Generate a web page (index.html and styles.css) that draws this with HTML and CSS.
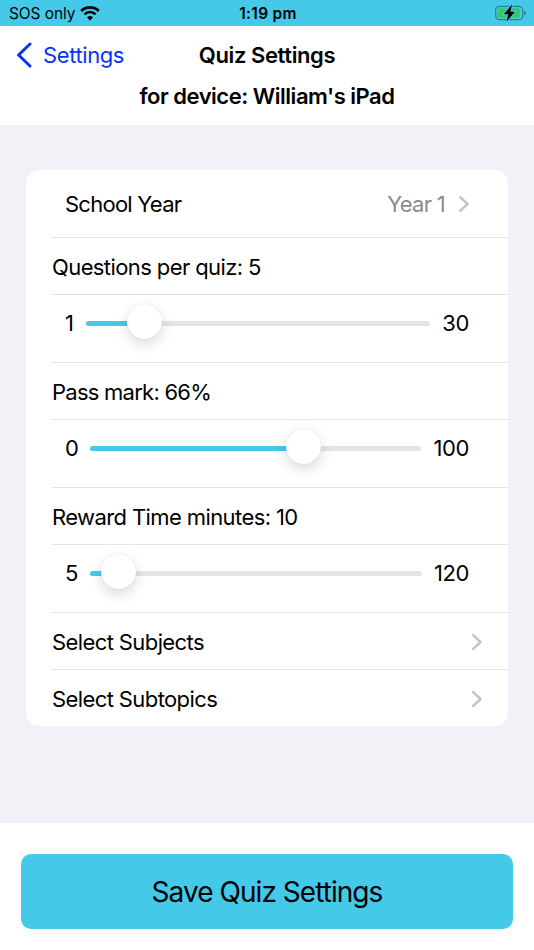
FILE: index.html
```
<!DOCTYPE html>
<html lang="en">
<head>
    <meta charset="UTF-8">
    <meta name="viewport" content="width=device-width, initial-scale=1.0">
    <title>Quiz Settings</title>
    <link rel="stylesheet" href="styles.css">
</head>
<body>
    <div class="status-bar">
        <div class="carrier">
            <span>SOS only</span>
            <svg class="wifi" width="20" height="16" viewBox="0 0 20 16">
                <path d="M1.2 6 A12.3 12.3 0 0 1 18.8 6" fill="none" stroke="#000" stroke-width="2.7"/>
                <path d="M4.5 9.4 A7.7 7.7 0 0 1 15.5 9.4" fill="none" stroke="#000" stroke-width="2.5"/>
                <path d="M10 15.4 L7 12.4 A4.3 4.3 0 0 1 13 12.4 Z"/>
            </svg>
        </div>
        <div class="clock">1:19 pm</div>
        <div class="battery">
            <svg width="32" height="18" viewBox="0 0 32 18">
                <rect x="0.7" y="2.3" width="27" height="13.4" rx="3.8" fill="none" stroke="#2b7f94" stroke-width="1.2"/>
                <path d="M29 6.8 Q31 7.3 31 9 Q31 10.7 29 11.2 Z" fill="#2b7f94"/>
                <rect x="2.7" y="4.3" width="22" height="9.4" rx="2" fill="#34c759"/>
                <path d="M16.6 1.3 L9.2 10 H13.5 L12 16.9 L19.4 8 H15.1 Z" stroke="#45c9e9" stroke-width="2.6"/>
                <path d="M16.6 1.3 L9.2 10 H13.5 L12 16.9 L19.4 8 H15.1 Z" stroke="#000" stroke-width="0.5" stroke-linejoin="round"/>
            </svg>
        </div>
    </div>

    <header class="header">
        <div class="nav">
            <a href="#" class="back">
                <svg width="16" height="26" viewBox="0 0 16 26">
                    <path d="M14 2 L2.6 13 L14 24" fill="none" stroke="#0a32f5" stroke-width="3" stroke-linecap="round" stroke-linejoin="round"/>
                </svg>
                <span>Settings</span>
            </a>
            <h1 class="title">Quiz Settings</h1>
        </div>
        <h2 class="device">for device: William's iPad</h2>
    </header>

    <main class="content">
        <div class="card">
            <div class="row row-tall row-inset">
                <span class="tight">School Year</span>
                <span class="value">Year 1</span>
                <svg class="chevron" width="12" height="18" viewBox="0 0 12 18">
                    <path d="M2.2 2.2 L9.6 9 L2.2 15.8" fill="none" stroke="#c4c4c7" stroke-width="2.5" stroke-linecap="round" stroke-linejoin="round"/>
                </svg>
            </div>
            <div class="row"><span>Questions per quiz: 5</span></div>
            <div class="row row-tall row-slider">
                <span class="min">1</span>
                <div class="slider">
                    <div class="fill" style="width: 17.1%"></div>
                    <div class="thumb" style="left: 17.1%"></div>
                </div>
                <span class="max">30</span>
            </div>
            <div class="row"><span class="tight">Pass mark: 66%</span></div>
            <div class="row row-tall row-slider">
                <span class="min">0</span>
                <div class="slider">
                    <div class="fill" style="width: 64.3%"></div>
                    <div class="thumb" style="left: 64.3%"></div>
                </div>
                <span class="max">100</span>
            </div>
            <div class="row"><span>Reward Time minutes: 10</span></div>
            <div class="row row-tall row-slider">
                <span class="min">5</span>
                <div class="slider">
                    <div class="fill" style="width: 8.6%"></div>
                    <div class="thumb" style="left: 8.6%"></div>
                </div>
                <span class="max">120</span>
            </div>
            <div class="row">
                <span>Select Subjects</span>
                <svg class="chevron" width="12" height="18" viewBox="0 0 12 18">
                    <path d="M2.2 2.2 L9.6 9 L2.2 15.8" fill="none" stroke="#c4c4c7" stroke-width="2.5" stroke-linecap="round" stroke-linejoin="round"/>
                </svg>
            </div>
            <div class="row">
                <span>Select Subtopics</span>
                <svg class="chevron" width="12" height="18" viewBox="0 0 12 18">
                    <path d="M2.2 2.2 L9.6 9 L2.2 15.8" fill="none" stroke="#c4c4c7" stroke-width="2.5" stroke-linecap="round" stroke-linejoin="round"/>
                </svg>
            </div>
        </div>
    </main>

    <footer class="footer">
        <button type="button" class="btn">Save Quiz Settings</button>
    </footer>
</body>
</html>
```
FILE: styles.css
```
* {
    margin: 0;
    padding: 0;
    box-sizing: border-box;
}

body {
    display: flex;
    flex-direction: column;
    height: 950px;
    font-family: Inter, 'Liberation Sans', sans-serif;
    font-size: 22px;
    line-height: 28px;
    letter-spacing: -0.4px;
    color: #000;
    background: #fff;
    overflow: hidden;
}

.status-bar {
    display: grid;
    grid-template-columns: 1fr auto 1fr;
    align-items: center;
    height: 26px;
    padding: 2px 7px 0 9px;
    background: #45c9e9;
    font-size: 15.5px;
    line-height: 20px;
    letter-spacing: -0.1px;
}

.carrier {
    display: flex;
    align-items: center;
    gap: 5px;
}

.wifi {
    margin-top: -3px;
}

.clock {
    font-weight: 600;
    letter-spacing: 0.3px;
}

.battery {
    display: flex;
    justify-content: flex-end;
    margin-top: -2px;
}

.header {
    height: 99px;
    padding-top: 14px;
}

.nav {
    display: grid;
    grid-template-columns: 1fr auto 1fr;
    align-items: center;
    padding: 0 16px;
    height: 30px;
}

.back {
    display: flex;
    align-items: center;
    gap: 11px;
    color: #0a32f5;
    text-decoration: none;
}

.title, .device {
    font-size: 22px;
    font-weight: 600;
    text-align: center;
}

.device {
    margin-top: 12px;
    letter-spacing: -0.48px;
}

.content {
    height: 698px;
    padding: 45px 26px 0;
    background: #f2f1f7;
}

.card {
    padding-left: 26px;
    background: #fff;
    border-radius: 13px;
}

.row {
    display: flex;
    align-items: center;
    height: 57px;
    padding: 1px 25px 0 0;
    border-bottom: 1px solid #e3e3e5;
    letter-spacing: -0.6px;
}

.row:last-child {
    height: 56px;
    border-bottom: none;
}

.row-tall {
    height: 68px;
}

.row-inset {
    padding: 0 38px 0 13px;
}

.row-slider {
    gap: 12px;
    padding: 0 39px 11px 13px;
    letter-spacing: -0.4px;
}

.tight {
    letter-spacing: -0.75px;
}

.chevron {
    margin-left: auto;
}

.value {
    margin-left: auto;
    color: #8a8a8e;
    letter-spacing: -0.7px;
}

.value + .chevron {
    margin-left: 13px;
}

.slider {
    position: relative;
    flex: 1;
    height: 5px;
    border-radius: 3px;
    background: #e4e4e6;
}

.fill {
    height: 100%;
    border-radius: 3px;
    background: #45c9e9;
}

.thumb {
    position: absolute;
    top: -16.5px;
    width: 35px;
    height: 35px;
    margin-left: -17.5px;
    border-radius: 50%;
    background: #fff;
    box-shadow: 0 0 1px rgba(0,0,0,0.15), 0 5px 14px rgba(0,0,0,0.15);
}

.footer {
    padding: 31px 21px 0;
}

.btn {
    display: block;
    width: 100%;
    height: 75px;
    border: none;
    border-radius: 10px;
    background: #45c9e9;
    color: #000;
    font-family: inherit;
    font-size: 28px;
    letter-spacing: -0.95px;
    cursor: pointer;
}
```
